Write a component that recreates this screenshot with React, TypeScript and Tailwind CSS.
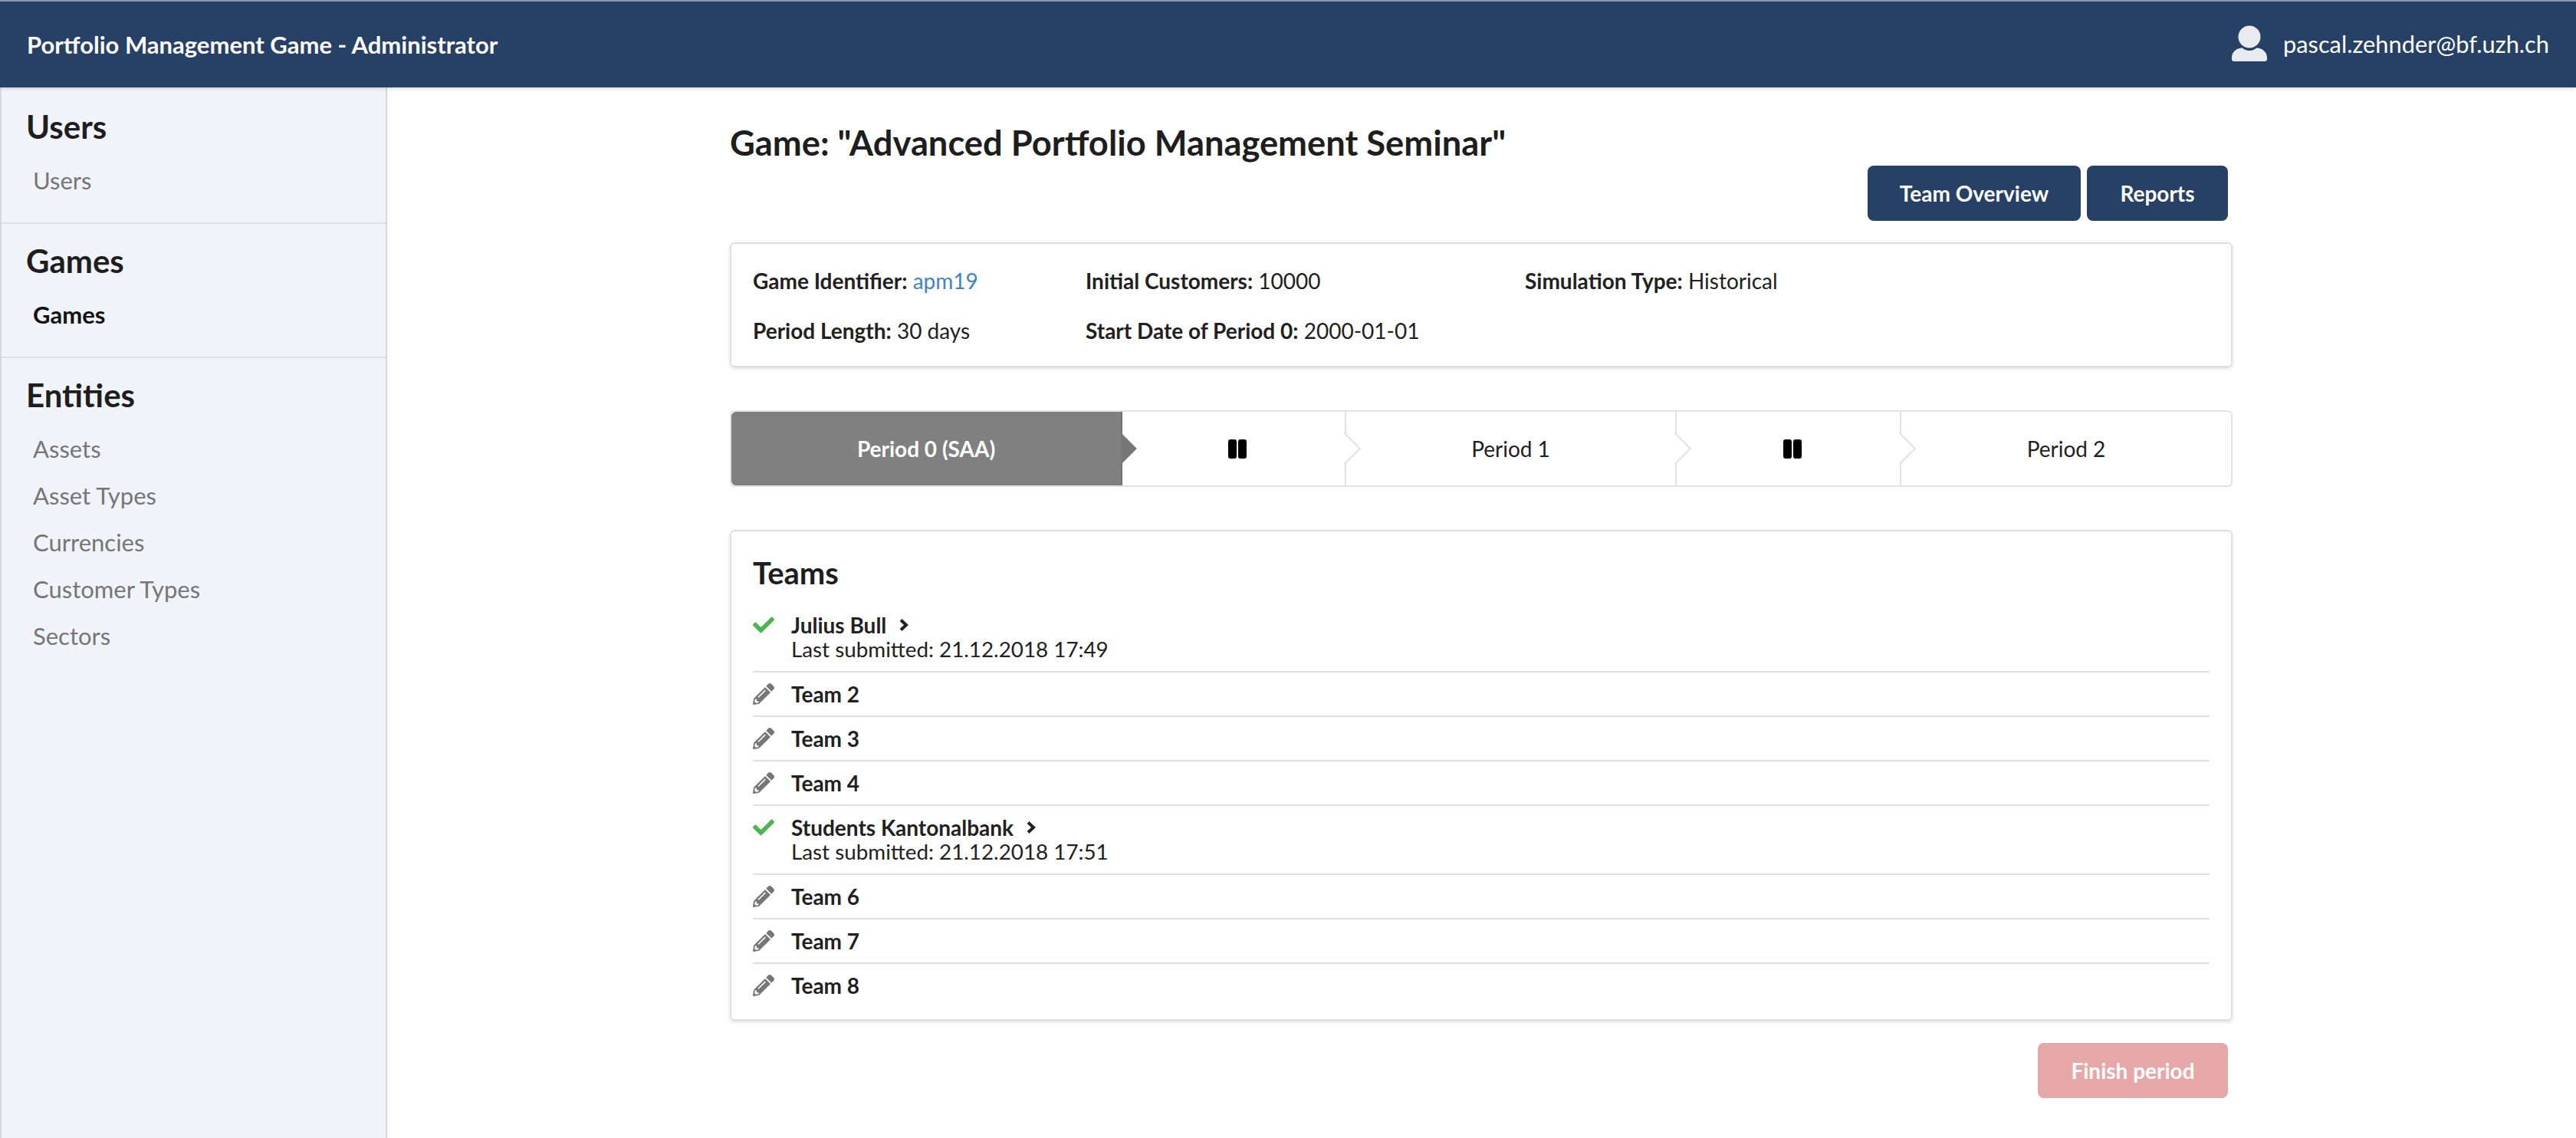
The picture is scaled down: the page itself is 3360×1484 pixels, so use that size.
import { FaCheck, FaPencilAlt } from "react-icons/fa";

const font = "font-['Lato','Noto_Sans',sans-serif]";

const sections = [
  { title: "Users", items: ["Users"], active: "" },
  { title: "Games", items: ["Games"], active: "Games" },
  { title: "Entities", items: ["Assets", "Asset Types", "Currencies", "Customer Types", "Sectors"], active: "" },
];

const teams = [
  { name: "Julius Bull", submitted: "21.12.2018 17:49" },
  { name: "Team 2" },
  { name: "Team 3" },
  { name: "Team 4" },
  { name: "Students Kantonalbank", submitted: "21.12.2018 17:51" },
  { name: "Team 6" },
  { name: "Team 7" },
  { name: "Team 8" },
];

function UserIcon() {
  return (
    <svg width="46" height="47" viewBox="0 0 46 47" className="fill-[#e9ebf0] -mt-[3px]">
      <circle cx="23" cy="15" r="14.5" />
      <path d="M14 29.5 C16 31.5 19 33 23 33 C27 33 30 31.5 32 29.5 C40 29.5 46 35 46 42 V44 C46 46 45 47 43 47 H3 C1 47 0 46 0 44 V42 C0 35 6 29.5 14 29.5 Z" />
    </svg>
  );
}

function PauseIcon() {
  return (
    <svg width="24" height="25" viewBox="0 0 24 25" className="fill-black ml-[10px]">
      <rect x="0" y="0" width="11" height="25" rx="3" />
      <rect x="13" y="0" width="11" height="25" rx="3" />
    </svg>
  );
}

function ChevronIcon() {
  return (
    <svg width="12" height="16" viewBox="0 0 12 16" className="ml-[17px] fill-none stroke-[#212121] stroke-[4]">
      <path d="M2 1.5 L9 8 L2 14.5" />
    </svg>
  );
}

function Field({ label, value, link }: { label: string; value: string; link?: boolean }) {
  return (
    <div>
      <span className="font-bold">{label}:</span>{" "}
      <span className={link ? "text-[#4183c4]" : ""}>{value}</span>
    </div>
  );
}

function Step({ width, active, label, pause, last }: { width: string; active?: boolean; label?: string; pause?: boolean; last?: boolean }) {
  return (
    <div className={`${width} relative flex items-center justify-center ${active ? "bg-[#808080] text-white font-bold rounded-l-[6px] border-r-2 border-[#717171]" : ""} ${!last && !active ? "border-r-2 border-[#e2e2e3]" : ""}`}>
      {pause ? <PauseIcon /> : label}
      {!last && (
        <div className={`absolute z-10 right-0 top-1/2 w-[30px] h-[30px] translate-x-1/2 -translate-y-1/2 rotate-45 ${active ? "bg-[#777777] [clip-path:polygon(0_0,100%_0,100%_100%)]" : "bg-white border-t-2 border-r-2 border-[#e2e2e3]"}`} />
      )}
    </div>
  );
}

export default function App() {
  return (
    <div className={`${font} w-[3360px] h-[1484px] flex flex-col overflow-hidden bg-white text-[28px] leading-[32px] text-[#212121]`}>
      <header className="h-[114px] shrink-0 border-t-2 border-[#8a97a8] bg-[#274066] text-white flex items-center justify-between pl-[35px] pr-[35px] shadow-[0_2px_4px_rgba(34,36,38,0.15)] relative z-20">
        <div className="text-[31px] font-bold">Portfolio Management Game - Administrator</div>
        <div className="flex items-center gap-[21px] text-[30.8px]">
          <UserIcon />
          <span>pascal.zehnder@bf.uzh.ch</span>
        </div>
      </header>
      <div className="flex flex-1 min-h-0">
        <aside className="w-[505px] shrink-0 bg-[#f0f4f9] border-l-2 border-r-2 border-[#d3d8de]">
          {sections.map((s) => (
            <div key={s.title} className="px-[32px] pt-[24px] first:pt-[27px] pb-[25px] border-b-2 border-[#dde1e7] last:border-b-0">
              <div className="text-[42px] leading-[48px] font-bold text-[#1e1e1e]">{s.title}</div>
              <div className="mt-[15px] pl-[9px]">
                {s.items.map((i) => (
                  <div key={i} className={`h-[61px] flex items-center text-[31px] ${s.active === i ? "font-bold text-[#111]" : "text-[#767676]"}`}>{i}</div>
                ))}
              </div>
            </div>
          ))}
        </aside>
        <main className="flex-1 pl-[447px]">
          <div className="w-[1960px]">
            <h1 className="mt-[44px] text-[45.3px] leading-[56px] font-bold text-[#1e1e1e]">Game: "Advanced Portfolio Management Seminar"</h1>
            <div className="mt-[2px] flex justify-end gap-[8px] pr-[6px] text-white font-bold">
              <button className="w-[278px] h-[72px] rounded-[8px] bg-[#274066]">Team Overview</button>
              <button className="w-[184px] h-[72px] rounded-[8px] bg-[#274066]">Reports</button>
            </div>
            <section className="mt-[28px] h-[163px] rounded-[6px] border-2 border-[#dedede] shadow-[0_2px_4px_rgba(34,36,38,0.15)] px-[28px] pt-[32px] grid grid-cols-[434px_573px_1fr] gap-y-[33px] content-start">
              <Field label="Game Identifier" value="apm19" link />
              <Field label="Initial Customers" value="10000" />
              <Field label="Simulation Type" value="Historical" />
              <Field label="Period Length" value="30 days" />
              <Field label="Start Date of Period 0" value="2000-01-01" />
            </section>
            <div className="mt-[56px] h-[100px] flex rounded-[6px] border-2 border-[#e2e2e3] overflow-hidden">
              <Step width="w-[510px]" active label="Period 0 (SAA)" />
              <Step width="w-[292px]" pause />
              <Step width="w-[431px]" label="Period 1" />
              <Step width="w-[293px]" pause />
              <Step width="flex-1" label="Period 2" last />
            </div>
            <section className="mt-[56px] h-[640px] rounded-[6px] border-2 border-[#dedede] shadow-[0_2px_4px_rgba(34,36,38,0.15)] px-[28px] pt-[30px]">
              <h2 className="text-[40px] leading-[48px] font-bold text-[#1e1e1e]">Teams</h2>
              <div className="mt-[16px]">
                {teams.map((t, i) => (
                  <div key={t.name} className={`flex py-[12px] ${i > 0 ? "border-t-2 border-[#dedede]" : ""}`}>
                    <div className="w-[50px] shrink-0 pt-[2px]">
                      {t.submitted ? <FaCheck className="text-[28px] text-[#4cb551]" /> : <FaPencilAlt className="text-[28px] text-[#767676]" />}
                    </div>
                    <div>
                      <div className="flex items-center font-bold">
                        {t.name}
                        {t.submitted && <ChevronIcon />}
                      </div>
                      {t.submitted && <div className="text-[27.8px]">Last submitted: {t.submitted}</div>}
                    </div>
                  </div>
                ))}
              </div>
            </section>
            <div className="mt-[29px] flex justify-end pr-[6px]">
              <button className="w-[248px] h-[72px] rounded-[8px] bg-[#e6a8a6] text-white font-bold">Finish period</button>
            </div>
          </div>
        </main>
      </div>
    </div>
  );
}
